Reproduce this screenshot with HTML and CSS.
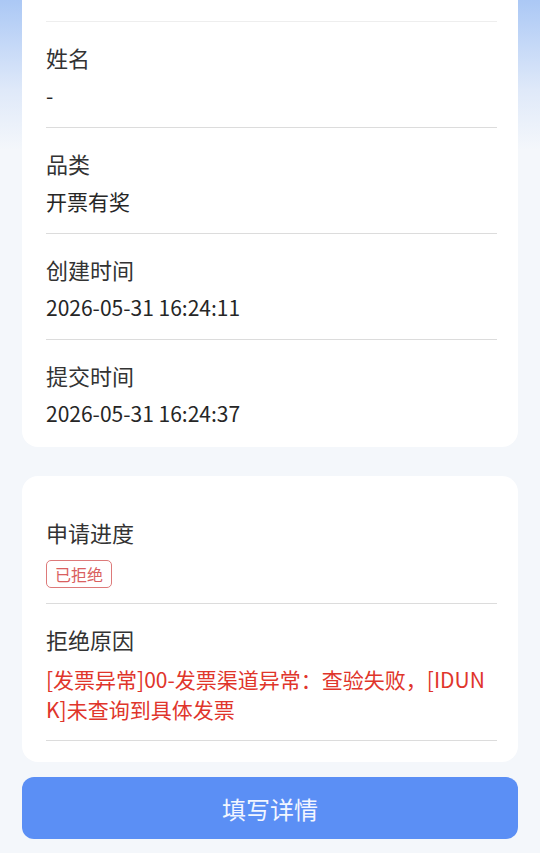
FILE: index.html
```html
<!DOCTYPE html>
<html lang="zh-CN">
    <head>
        <meta charset="UTF-8" />
        <meta name="viewport" content="width=device-width, initial-scale=1.0" />
        <title>申请详情</title>
        <link rel="stylesheet" href="styles.css">
    </head>
    <body>
        <div id="page">
            <!-- 基本信息 -->
            <div class="card card-top">
                <div class="row row-cut"></div>
                <div class="row">
                    <div class="label">姓名</div>
                    <div class="value">-</div>
                </div>
                <div class="row">
                    <div class="label">品类</div>
                    <div class="value">开票有奖</div>
                </div>
                <div class="row">
                    <div class="label">创建时间</div>
                    <div class="value">2026-05-31 16:24:11</div>
                </div>
                <div class="row last">
                    <div class="label">提交时间</div>
                    <div class="value">2026-05-31 16:24:37</div>
                </div>
            </div>
            <!-- 审核状态 -->
            <div class="card card-status">
                <div class="row">
                    <div class="label">申请进度</div>
                    <div class="value"><span class="tag">已拒绝</span></div>
                </div>
                <div class="row">
                    <div class="label">拒绝原因</div>
                    <div class="value reason">[发票异常]00-发票渠道异常：查验失败，[IDUNK]未查询到具体发票</div>
                </div>
            </div>
            <button class="btn">填写详情</button>
        </div>
    </body>
</html>
```

FILE: styles.css
```css
body {
    font-family: "Noto Sans CJK SC", "Noto Sans", sans-serif;
    margin: 0;
    background-color: #f4f7fb;
    background-image: linear-gradient(to bottom, #abc8f5 0, #dfe9f9 90px, #f4f7fb 150px);
    background-repeat: no-repeat;
    background-size: 100% 160px;
}
#page {
    padding: 0 22px;
}

.card {
    background-color: #fff;
    border-radius: 16px;
    padding: 0 21px 0 24px;
}
.card-top {
    border-radius: 0 0 16px 16px;
    padding-bottom: 2px;
}
.card-status {
    margin-top: 29px;
    padding-top: 21px;
    padding-bottom: 21px;
}

.row {
    padding: 19px 0 16px 0;
    border-bottom: 1px solid #dcdcdc;
}
.row-cut {
    height: 21px;
    padding: 0;
    border-bottom-color: #eeeeee;
}
.row.last {
    border-bottom: none;
}
.label {
    font-size: 22px;
    line-height: 32px;
    color: #333;
}
.value {
    margin-top: 6px;
    font-size: 21px;
    line-height: 32px;
    color: #262626;
}

.tag {
    display: inline-block;
    margin-top: 6px;
    padding: 0 8px;
    font-size: 16px;
    line-height: 26px;
    color: #d96060;
    border: 1px solid #dd7a7a;
    border-radius: 5px;
    vertical-align: top;
}
.card-status .row:first-child {
    padding-bottom: 15px;
}
.reason {
    margin-top: 9px;
    padding-right: 10px;
    line-height: 30px;
    color: #e0352b;
    word-break: break-all;
}

.btn {
    display: block;
    width: 100%;
    height: 62px;
    margin-top: 15px;
    font-family: inherit;
    font-size: 24px;
    color: #f2f6ff;
    background-color: #5b8ff5;
    border: none;
    border-radius: 12px;
    cursor: pointer;
}
```
